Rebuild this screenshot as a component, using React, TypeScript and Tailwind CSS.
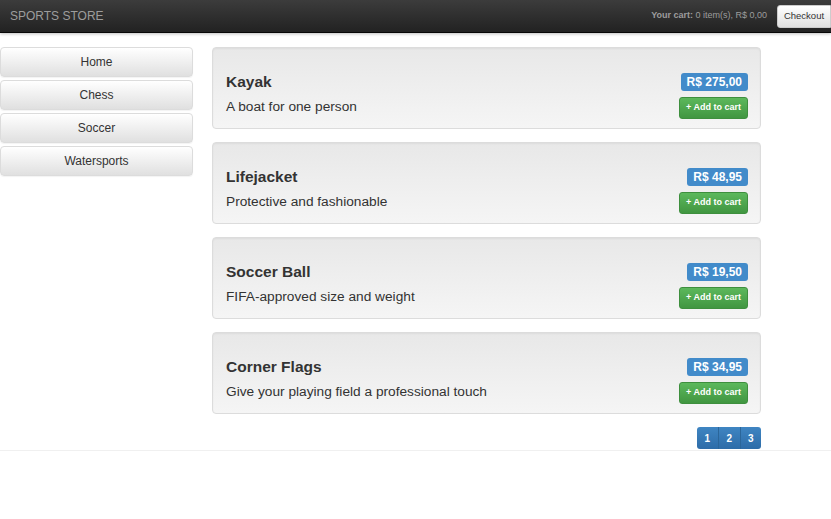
import React from 'react';

interface Product {
  name: string;
  description: string;
  price: number;
}

const products: Product[] = [
  { name: 'Kayak', description: 'A boat for one person', price: 275 },
  { name: 'Lifejacket', description: 'Protective and fashionable', price: 48.95 },
  { name: 'Soccer Ball', description: 'FIFA-approved size and weight', price: 19.5 },
  { name: 'Corner Flags', description: 'Give your playing field a professional touch', price: 34.95 },
];

const categories = ['Home', 'Chess', 'Soccer', 'Watersports'];

const formatPrice = (val: number) => 'R$ ' + val.toFixed(2).replace('.', ',');

export default function App() {
  return (
    <div className="min-h-[519px] bg-white font-['Liberation_Sans',Arial,sans-serif] text-[#333]">
      <div className="flex h-[33px] items-center justify-between bg-gradient-to-b from-[#3c3c3c] to-[#222] border-b border-[#080808] shadow-[0_1px_3px_rgba(0,0,0,0.25)]">
        <span className="pl-[10px] text-[12px] text-[#9d9d9d]">SPORTS STORE</span>
        <div className="flex items-center">
          <span className="text-[9px] text-[#9d9d9d]">
            <b>Your cart:</b> 0 item(s), R$ 0,00
          </span>
          <button className="ml-[10px] h-[23px] w-[54px] rounded-l-[3px] border border-[#ccc] bg-gradient-to-b from-white to-[#e0e0e0] text-[9.5px] text-[#333]">
            Checkout
          </button>
        </div>
      </div>

      <div className="border-b border-[#f0f0f0] pb-[1px]">
        <div className="flex pt-[14px]">
          <div className="flex w-[193px] flex-col gap-[3px]">
            {categories.map(c => (
              <button
                key={c}
                className="h-[30px] w-full rounded-[4px] border border-[#dcdcdc] bg-gradient-to-b from-white to-[#e0e0e0] text-[12px] text-[#333] shadow-[0_1px_1px_rgba(0,0,0,0.05)]"
              >
                {c}
              </button>
            ))}
          </div>

          <div className="ml-[19px] w-[549px]">
            {products.map(p => (
              <div
                key={p.name}
                className="mb-[13px] flex h-[82px] items-start justify-between rounded-[4px] border border-[#dcdcdc] bg-gradient-to-b from-[#e8e8e8] to-[#f5f5f5] pl-[13px] pr-[12px] shadow-[inset_0_1px_2px_rgba(0,0,0,0.05)]"
              >
                <div className="pt-[25px]">
                  <h4 className="text-[15.5px] font-bold leading-[18px] text-[#333]">{p.name}</h4>
                  <p className="mt-[6px] text-[13.7px] leading-[20px] text-[#333]">{p.description}</p>
                </div>
                <div className="flex flex-col items-end pt-[25px]">
                  <span className="rounded-[3px] bg-[#428bca] px-[6px] text-[12px] font-bold leading-[18px] text-white">
                    {formatPrice(p.price)}
                  </span>
                  <button className="mt-[6px] h-[22px] w-[69px] rounded-[3px] border border-[#3e8f3e] bg-gradient-to-b from-[#5cb85c] to-[#419641] text-[9px] font-bold text-white">
                    + Add to cart
                  </button>
                </div>
              </div>
            ))}
            <div className="flex justify-end">
              <div className="flex overflow-hidden rounded-[3px]">
                {[1, 2, 3].map(n => (
                  <button
                    key={n}
                    className="h-[22px] w-[21.5px] border-l border-[#2b669a] bg-gradient-to-b from-[#3f85c2] to-[#2d6ca8] text-[10px] font-bold text-white first:border-l-0"
                  >
                    {n}
                  </button>
                ))}
              </div>
            </div>
          </div>
        </div>
      </div>
    </div>
  );
}
